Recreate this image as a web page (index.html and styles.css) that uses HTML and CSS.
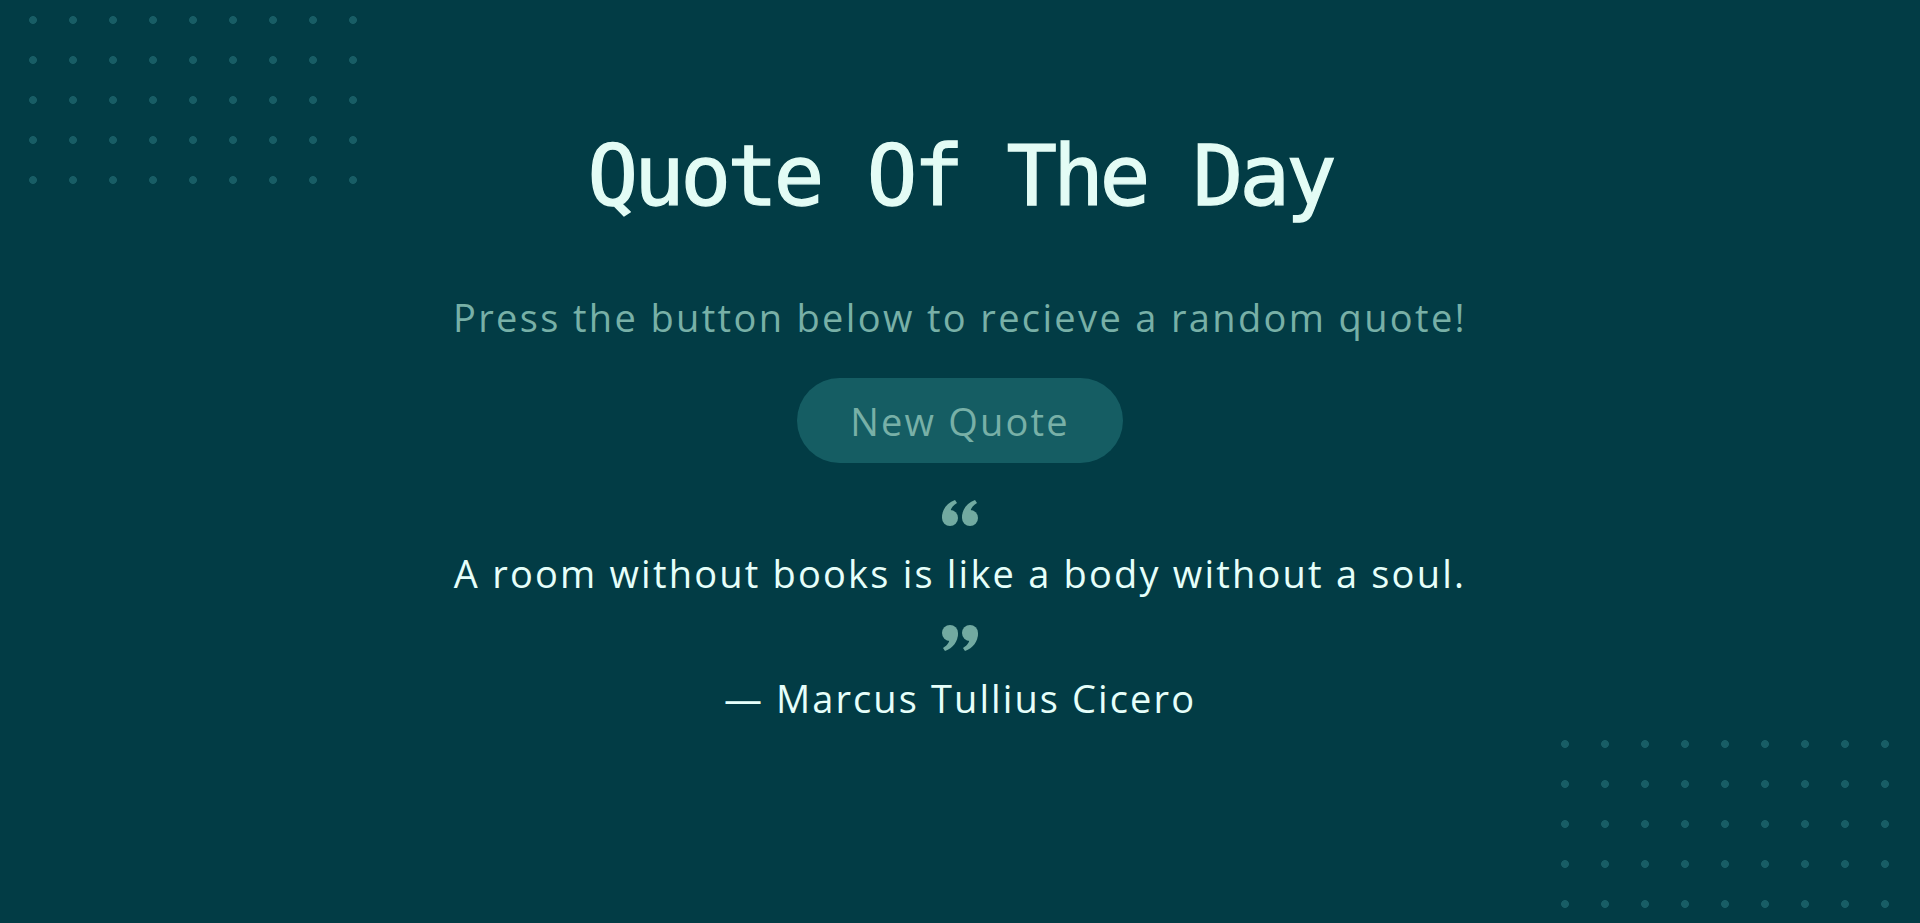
FILE: index.html
```html
<!DOCTYPE html>
<html lang="en">
<head>
<meta charset="utf-8">
<title>Quote Of The Day</title>
<link rel="stylesheet" href="styles.css">
</head>
<body>
<div class="dots dots-top"></div>
<div class="dots dots-bottom"></div>
<main class="app">
  <h1 class="title">Quote Of The Day</h1>
  <p class="subtitle">Press the button below to recieve a random quote!</p>
  <button class="btn" type="button">New Quote</button>
  <section class="quote">
    <svg class="qmark" viewBox="0 0 36 26" aria-hidden="true">
      <g fill="currentColor">
        <circle cx="8" cy="18" r="8"/>
        <path d="M0 18 C0 9 5 3 13 0 L15 3 C10 6 8.5 9.5 8.5 12 L8 18 Z"/>
        <circle cx="28" cy="18" r="8"/>
        <path d="M20 18 C20 9 25 3 33 0 L35 3 C30 6 28.5 9.5 28.5 12 L28 18 Z"/>
      </g>
    </svg>
    <p class="quote-text">A room without books is like a body without a soul.</p>
    <svg class="qmark qmark-close" viewBox="0 0 36 26" aria-hidden="true">
      <g fill="currentColor" transform="rotate(180 18 13)">
        <circle cx="8" cy="18" r="8"/>
        <path d="M0 18 C0 9 5 3 13 0 L15 3 C10 6 8.5 9.5 8.5 12 L8 18 Z"/>
        <circle cx="28" cy="18" r="8"/>
        <path d="M20 18 C20 9 25 3 33 0 L35 3 C30 6 28.5 9.5 28.5 12 L28 18 Z"/>
      </g>
    </svg>
    <p class="author">— Marcus Tullius Cicero</p>
  </section>
</main>
</body>
</html>
```
FILE: styles.css
```css
* { box-sizing: border-box; }

html, body {
  margin: 0;
  padding: 0;
  height: 100%;
}

body {
  background: #023c45;
  overflow: hidden;
  position: relative;
  font-family: "Open Sans", "Noto Sans", sans-serif;
}

.dots {
  position: absolute;
  width: 360px;
  height: 200px;
  background-image: radial-gradient(circle at 20px 20px, #185d65 0, #185d65 3.6px, transparent 4.2px);
  background-size: 40px 40px;
  pointer-events: none;
}

.dots-top { left: 13px; top: 0; }
.dots-bottom { right: 15px; bottom: -1px; }

.app {
  display: flex;
  flex-direction: column;
  align-items: center;
  padding-top: 127px;
  text-align: center;
}

.title {
  margin: 0;
  font-family: "DejaVu Sans Mono", monospace;
  font-weight: normal;
  font-size: 84px;
  letter-spacing: -4px;
  line-height: 98px;
  color: #e3fcf5;
  -webkit-text-stroke: 1.3px #e3fcf5;
}

.subtitle {
  margin: 67px 0 0;
  font-size: 38px;
  line-height: 50px;
  letter-spacing: 2.35px;
  color: #78b0a7;
}

.btn {
  margin-top: 36px;
  height: 85px;
  width: 326px;
  border: none;
  border-radius: 43px;
  background: #155d63;
  color: #78b0a7;
  font-family: inherit;
  font-size: 38px;
  letter-spacing: 2.2px;
  padding: 0;
}

.quote {
  display: flex;
  flex-direction: column;
  align-items: center;
  margin-top: 37px;
}

.qmark {
  width: 36px;
  height: 26px;
  color: #72aaa1;
}

.quote-text {
  margin: 22px 0 0;
  font-size: 38px;
  line-height: 50px;
  letter-spacing: 2.2px;
  color: #e6fffa;
}

.author {
  margin: 22px 0 0;
  font-size: 38px;
  line-height: 50px;
  letter-spacing: 2.1px;
  color: #e6fffa;
}

.qmark-close { margin-top: 27px; }
```
